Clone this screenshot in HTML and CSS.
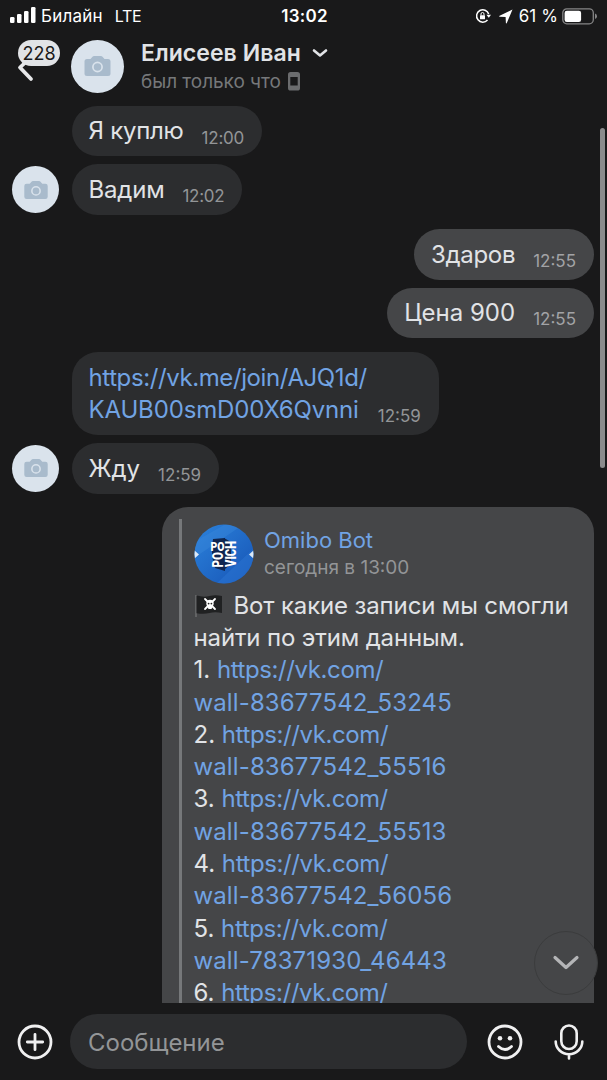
FILE: index.html
```html
<!DOCTYPE html>
<html lang="ru">
<head>
    <meta charset="UTF-8">
    <meta name="viewport" content="width=device-width, initial-scale=1.0">
    <title>Елисеев Иван</title>
    <link rel="stylesheet" href="styles.css">
</head>
<body>

<svg class="sprite" width="0" height="0">
    <symbol id="camera" viewBox="0 0 26 20">
        <path fill="#a9bbcc" d="M2.500 3H6l2-2.200Q8.600 0 9.600 0h6.800q1 0 1.600.8L20 3h3.500Q26 3 26 5.500v12q0 2.500-2.500 2.500h-21Q0 20 0 17.500v-12Q0 3 2.500 3z"/>
        <circle cx="13" cy="11" r="4.600" fill="none" stroke="#dae3ec" stroke-width="1.700"/>
    </symbol>
</svg>

<div class="status-bar">
    <div class="status-left">
        <svg class="signal" width="26" height="16" viewBox="0 0 26 16" fill="#fff">
            <rect x="0" y="10" width="4.500" height="6" rx="1.300"/>
            <rect x="7" y="7" width="4.500" height="9" rx="1.300"/>
            <rect x="14" y="4" width="4.500" height="12" rx="1.300"/>
            <rect x="21" y="0" width="4.500" height="16" rx="1.300"/>
        </svg>
        <span class="carrier">Билайн</span>
        <span class="network">LTE</span>
    </div>
    <span class="clock">13:02</span>
    <div class="status-right">
        <svg class="lock" width="16" height="16" viewBox="0 0 16 16">
            <path d="M13.700 6A6.200 6.200 0 1 0 12.500 12" fill="none" stroke="#fff" stroke-width="1.500"/>
            <path d="M11.400 6.800h4.600l-2.200 3z" fill="#fff"/>
            <rect x="5" y="7.300" width="5" height="4" rx=".6" fill="#fff"/>
            <path d="M6 7.500V6a1.500 1.500 0 0 1 3 0v1.500" fill="none" stroke="#fff"/>
        </svg>
        <svg class="location" width="14" height="15" viewBox="0 0 14 15">
            <path d="M13.500.5L7.800 14q-.6 1-.9-.1L6.600 8 .7 7.700Q-.4 7.300.6 6.700z" fill="#fff"/>
        </svg>
        <span class="percent">61 %</span>
        <svg class="battery" width="36" height="17" viewBox="0 0 36 17">
            <rect x=".8" y=".8" width="30.500" height="15" rx="4" fill="none" stroke="#858586" stroke-width="1.300"/>
            <rect x="2.600" y="2.700" width="16.500" height="11.300" rx="2.200" fill="#fff"/>
            <path d="M33 5.500q2 .8 2 2.800t-2 2.800z" fill="#858586"/>
        </svg>
    </div>
</div>

<div class="header">
    <div class="back">
        <svg width="18" height="30" viewBox="0 0 18 30">
            <path d="M14 4L3 14.500l11 11.500" fill="none" stroke="#e7e8ea" stroke-width="3.800" stroke-linecap="round" stroke-linejoin="round"/>
        </svg>
        <span class="counter">228</span>
    </div>
    <div class="avatar avatar-big"><svg width="27" height="20"><use href="#camera"/></svg></div>
    <div class="peer">
        <div class="peer-name">
            <span class="name">Елисеев Иван</span>
            <svg width="16" height="10" viewBox="0 0 16 10">
                <path d="M2 2.500l6 5 6-5" fill="none" stroke="#e1e3e6" stroke-width="2.600" stroke-linecap="round" stroke-linejoin="round"/>
            </svg>
        </div>
        <div class="peer-status">
            <span class="seen">был только что</span>
            <svg width="12" height="19" viewBox="0 0 12 19">
                <rect width="12" height="18.500" rx="2.600" fill="#6b6c6e"/>
                <rect x="2.300" y="5" width="7.400" height="8.500" fill="#19191a"/>
            </svg>
        </div>
    </div>
</div>

<div class="chat">
    <div class="message">
        <div class="bubble"><span class="text t-buy">Я куплю</span><span class="time time-narrow">12:00</span></div>
    </div>
    <div class="message">
        <div class="avatar"><svg width="24" height="18"><use href="#camera"/></svg></div>
        <div class="bubble"><span class="text t-vadim">Вадим</span><span class="time time-narrow">12:02</span></div>
    </div>
    <div class="message out first">
        <div class="bubble"><span class="text t-hi">Здаров</span><span class="time">12:55</span></div>
    </div>
    <div class="message out">
        <div class="bubble"><span class="text">Цена 900</span><span class="time">12:55</span></div>
    </div>
    <div class="message first">
        <div class="bubble bubble-link"><a class="text link"><span class="t-join">https://vk.me/join/AJQ1d/</span><br><span class="t-code">KAUB00smD00X6Qvnni</span></a><span class="time">12:59</span></div>
    </div>
    <div class="message">
        <div class="avatar"><svg width="24" height="18"><use href="#camera"/></svg></div>
        <div class="bubble"><span class="text">Жду</span><span class="time">12:59</span></div>
    </div>
    <div class="message out first">
        <div class="bubble bubble-forward">
            <div class="forward">
                <div class="forward-head">
                    <svg class="bot-avatar" width="60" height="60" viewBox="0 0 60 60">
                        <defs>
                            <linearGradient id="blue" x1="0" y1="0" x2="1" y2="1">
                                <stop offset="0" stop-color="#2c83dc"/>
                                <stop offset="1" stop-color="#1653b4"/>
                            </linearGradient>
                            <clipPath id="round"><circle cx="30" cy="30" r="29.500"/></clipPath>
                        </defs>
                        <g clip-path="url(#round)">
                            <rect width="60" height="60" fill="url(#blue)"/>
                            <path d="M0 18L32 0h18L0 34z" fill="#408bdc" opacity=".35"/>
                            <path d="M22 60L60 24v20L44 60z" fill="#2c76d3" opacity=".5"/>
                            <path d="M19 15l12-1v33l-10-3q-5-14-2-29z" fill="#10264f"/>
                            <path d="M30 14l7 4v22l-6 5z" fill="#10264f"/>
                            <path d="M0 26l5 4.500L0 35zM60 26l-5 4.500 5 4.500z" fill="#dce9f8"/>
                            <g class="bot-logo">
                                <text x="16.500" y="26.500" textLength="14" lengthAdjust="spacingAndGlyphs" font-size="13">PO</text>
                                <g transform="rotate(-90 30 30)">
                                    <text x="16.500" y="28.500" textLength="15.500" lengthAdjust="spacingAndGlyphs" font-size="15">PO</text>
                                    <text x="17" y="42" textLength="26" lengthAdjust="spacingAndGlyphs" font-size="14">VICH</text>
                                </g>
                            </g>
                        </g>
                    </svg>
                    <div class="bot">
                        <span class="bot-name">Omibo Bot</span>
                        <span class="bot-date">сегодня в 13:00</span>
                    </div>
                </div>
                <div class="text">
                    <svg class="flag" width="28" height="24" viewBox="0 0 28 24">
                        <path d="M1 1v22" stroke="#77787a" stroke-width="1.200"/>
                        <path d="M1.500 1.500q7 2 13 .5t12.500 0v17q-7-1.500-12.500 0t-13 .2z" fill="#202122"/>
                        <path d="M10 5l10 10M20 5L10 15" stroke="#fff" stroke-width="1.800" stroke-linecap="round"/>
                        <circle cx="15" cy="9.500" r="3.700" fill="#fff"/>
                        <rect x="13" y="11.500" width="4" height="3.500" rx="1" fill="#fff"/>
                        <circle cx="13.600" cy="9.600" r=".9" fill="#222"/>
                        <circle cx="16.400" cy="9.600" r=".9" fill="#222"/>
                    </svg><span class="t-found">Вот какие записи мы смогли</span><br>
                    <span class="t-found">найти по этим данным.</span><br>
                    1. <a class="link"><span class="t-host">https://vk.com/</span><br><span class="t-wall">wall-83677542_53245</span></a><br>
                    2. <a class="link"><span class="t-host">https://vk.com/</span><br><span class="t-wall">wall-83677542_55516</span></a><br>
                    3. <a class="link"><span class="t-host">https://vk.com/</span><br><span class="t-wall">wall-83677542_55513</span></a><br>
                    4. <a class="link"><span class="t-host">https://vk.com/</span><br><span class="t-wall">wall-83677542_56056</span></a><br>
                    5. <a class="link"><span class="t-host">https://vk.com/</span><br><span class="t-wall">wall-78371930_46443</span></a><br>
                    6. <a class="link"><span class="t-host">https://vk.com/</span></a>
                </div>
            </div>
        </div>
    </div>
    <div class="scrollbar"></div>
    <div class="scroll-down">
        <svg width="28" height="18" viewBox="0 0 28 18">
            <path d="M3 3.500l11 10 11-10" fill="none" stroke="#b4b5b7" stroke-width="3.200" stroke-linecap="round" stroke-linejoin="round"/>
        </svg>
    </div>
</div>

<div class="composer">
    <svg class="plus" width="36" height="36" viewBox="0 0 36 36" fill="none" stroke="#f0f0f1" stroke-width="2.800" stroke-linecap="round">
        <circle cx="18" cy="18" r="16"/>
        <path d="M18 10.300v15.400M10.300 18h15.400"/>
    </svg>
    <div class="field"><span>Сообщение</span></div>
    <svg class="smile" width="36" height="36" viewBox="0 0 36 36" fill="none" stroke="#f0f0f1" stroke-width="2.800" stroke-linecap="round">
        <circle cx="18" cy="18" r="16"/>
        <path d="M11.500 22.500q6.500 6 13 0"/>
        <circle cx="13" cy="14.200" r="2.300" fill="#f0f0f1" stroke="none"/>
        <circle cx="23" cy="14.200" r="2.300" fill="#f0f0f1" stroke="none"/>
    </svg>
    <svg class="mic" width="30" height="36" viewBox="0 0 30 36" fill="none" stroke="#f0f0f1" stroke-width="2.600" stroke-linecap="round">
        <rect x="7.300" y="1.500" width="15.400" height="23.500" rx="7.700"/>
        <path d="M1.700 17.500a13.300 12.800 0 0 0 26.600 0M15 30.500v4"/>
    </svg>
</div>

</body>
</html>
```
FILE: styles.css
```css
* {
    box-sizing: border-box;
}

body {
    font-family: Inter, 'Liberation Sans', sans-serif;
    margin: 0;
    background: #19191a;
    color: #e1e3e6;
    height: 1080px;
    display: flex;
    flex-direction: column;
    overflow: hidden;
}

svg {
    display: block;
    flex-shrink: 0;
}

.sprite {
    position: absolute;
}

/* Status bar */
.status-bar {
    display: flex;
    align-items: center;
    height: 32px;
    padding: 0 9px 0 10px;
    font-size: 17px;
    color: #fff;
}

.status-left, .status-right {
    flex: 1;
    display: flex;
    align-items: center;
}

.status-right {
    justify-content: flex-end;
}

.signal {
    margin: -2px 5px 0 0;
}

.carrier {
    letter-spacing: .2px;
}

.network {
    margin-left: 12px;
    font-size: 16px;
    letter-spacing: -.3px;
}

.clock {
    font-weight: 600;
    letter-spacing: .3px;
    margin-right: -1px;
}

.location {
    margin: 0 6px 0 8px;
}

.percent {
    margin-right: 4px;
    letter-spacing: .1px;
}

/* Header */
.header {
    display: flex;
    align-items: center;
    height: 68px;
    padding-left: 17px;
}

.back {
    position: relative;
    width: 53.500px;
    height: 52px;
    padding-top: 13px;
}

.counter {
    position: absolute;
    top: 0;
    left: 1px;
    width: 42px;
    height: 26px;
    border-radius: 13px;
    background: #e1e3e6;
    color: #19191a;
    font-size: 18px;
    line-height: 27px;
    text-align: center;
}

.avatar {
    width: 47px;
    height: 47px;
    border-radius: 50%;
    background: #dae3ec;
    display: flex;
    align-items: center;
    justify-content: center;
}

.avatar-big {
    width: 53px;
    height: 53px;
}

.peer {
    margin-left: 17.500px;
    padding-top: 2px;
}

.peer-name, .peer-status {
    display: flex;
    align-items: center;
    height: 28px;
}

.peer-name svg {
    margin-left: 11px;
}

.name {
    font-size: 23px;
    font-weight: 600;
    letter-spacing: .05px;
}

.peer-status {
    font-size: 19px;
    color: #76787a;
}

.peer-status svg {
    margin-left: 7px;
}

.seen {
    letter-spacing: -.05px;
}

/* Messages */
.chat {
    position: relative;
    flex: 1;
    min-height: 0;
    overflow: hidden;
    padding: 5.800px 13px 0 12px;
    display: flex;
    flex-direction: column;
    gap: 8px;
}

.message {
    display: flex;
    align-items: center;
    justify-content: space-between;
    flex-shrink: 0;
}

.first {
    margin-top: 5.700px;
}

.message .bubble {
    margin-right: auto;
}

.message .bubble:first-child {
    margin-left: 59.500px;
}

.message.out .bubble {
    margin-left: auto;
    margin-right: 0;
    background: #454648;
}

.avatar + .bubble {
    margin-left: 12.500px;
}

.bubble {
    display: flex;
    align-items: flex-end;
    gap: 18px;
    padding: 9.700px 18px 8.700px 17px;
    border-radius: 26px;
    background: #2c2d2f;
}

.bubble-link {
    gap: 11px;
}

.text {
    font-size: 24px;
    line-height: 32.300px;
    white-space: nowrap;
}

.link {
    color: #71a3e3;
}

.t-buy {
    letter-spacing: -.25px;
}

.t-vadim {
    letter-spacing: -.2px;
}

.t-hi {
    letter-spacing: -.3px;
}

.t-join, .t-host {
    letter-spacing: -.4px;
}

.t-code {
    letter-spacing: -.15px;
}

.t-found {
    letter-spacing: -.14px;
}

.t-wall {
    letter-spacing: .12px;
}

.time {
    font-size: 17px;
    line-height: 20px;
    color: #939597;
}

.time-narrow {
    letter-spacing: -.25px;
}

.out .time {
    color: #a2a3a6;
}

.message .bubble-forward {
    width: 432px;
    height: 560px;
    padding: 12px 0 0 17px;
    border-radius: 26px;
}

.forward {
    align-self: stretch;
    border-left: 3px solid #76787a;
    padding: 4.500px 0 0 11.500px;
}

.forward-head {
    display: flex;
    align-items: center;
    margin-bottom: 6px;
}

.bot {
    display: flex;
    flex-direction: column;
    margin-left: 10.500px;
}

.bot-name {
    font-size: 22px;
    line-height: 28px;
    color: #71a3e3;
}

.bot-date {
    font-size: 19px;
    line-height: 27px;
    color: #939597;
}

.bot-logo {
    font-family: Roboto, sans-serif;
    font-weight: 900;
    fill: #fff;
}

.flag {
    display: inline-block;
    vertical-align: -4px;
    margin: 0 11px 0 1px;
}

.scrollbar {
    position: absolute;
    top: 28px;
    right: 2px;
    width: 5px;
    height: 340px;
    border-radius: 3px;
    background: #8b8b8c;
}

.scroll-down {
    position: absolute;
    right: 9px;
    bottom: 8px;
    width: 64px;
    height: 64px;
    border: 1px solid #3b3c3d;
    border-radius: 50%;
    background: #454648;
    display: flex;
    align-items: center;
    justify-content: center;
}

/* Composer */
.composer {
    display: flex;
    align-items: center;
    height: 77px;
    padding: 0 23px 0 17px;
}

.field {
    flex: 1;
    height: 55px;
    margin: 0 20px 0 17px;
    padding-left: 18px;
    border-radius: 28px;
    background: #2c2d2f;
    color: #939597;
    font-size: 24px;
    line-height: 57px;
}

.mic {
    margin-left: 31px;
}
```
